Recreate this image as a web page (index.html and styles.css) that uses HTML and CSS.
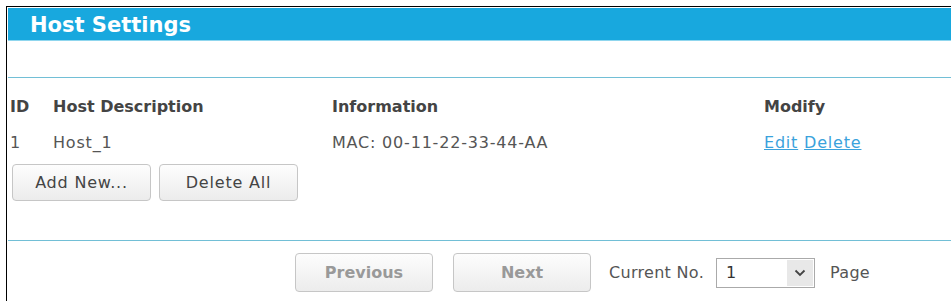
FILE: index.html
```html
<!DOCTYPE html>
<html>
<head>
    <title>Host Settings</title>
    <link rel="stylesheet" href="styles.css">
</head>
<body>
    <div id="host_panel">
        <div class="panel_title">Host Settings</div>

        <div class="spacer"></div>

        <div class="host_table">
            <div class="cell head">ID</div>
            <div class="cell head">Host Description</div>
            <div class="cell head">Information</div>
            <div class="cell head">Modify</div>

            <div class="cell">1</div>
            <div class="cell">Host_1</div>
            <div class="cell">MAC: 00-11-22-33-44-AA</div>
            <div class="cell"><a href="#">Edit</a> <a href="#">Delete</a></div>
        </div>

        <div class="table_buttons">
            <button class="btn">Add New...</button>
            <button class="btn">Delete All</button>
        </div>

        <div class="pager">
            <button class="btn btn_page" disabled>Previous</button>
            <button class="btn btn_page" disabled>Next</button>
            <span class="pager_label">Current No.</span>
            <div class="page_select">
                <span class="page_value">1</span>
                <span class="page_arrow">
                    <svg width="12" height="8" viewBox="0 0 12 8"><path d="M1.5 1.5 L6 6 L10.5 1.5" fill="none" stroke="#444" stroke-width="1.8"/></svg>
                </span>
            </div>
            <span class="pager_label page_word">Page</span>
        </div>
    </div>
</body>
</html>
```

FILE: styles.css
```css
body {
    margin:0;
    padding:6px 0 0 6px;
    background:#fff;
    font-family:"DejaVu Sans", Verdana, sans-serif;
    font-size:16px;
    letter-spacing:0.8px;
    color:#555;
}

#host_panel {
    border-top:1px solid #000;
    border-left:1px solid #000;
    padding:1px 0 0 1px;
    height:300px;
}

.panel_title {
    height:32px;
    line-height:35px;
    padding-left:22px;
    background:#18a8de;
    border-bottom:1px solid #8fd6ee;
    color:#fff;
    font-size:21px;
    font-weight:bold;
    letter-spacing:0;
}

.spacer {
    height:36px;
    border-bottom:1px solid #72bfd6;
}

.host_table {
    display:grid;
    grid-template-columns:43px 279px 432px auto;
    padding:19px 0 0 2px;
    row-gap:16px;
}

.cell {
    line-height:20px;
}

.cell.head {
    font-weight:bold;
    letter-spacing:0;
    color:#444;
}

.cell a {
    color:#3aa2dc;
}

.table_buttons {
    display:flex;
    gap:8px;
    padding:11px 0 39px 4px;
    height:37px;
    border-bottom:1px solid #72bfd6;
}

.btn {
    width:139px;
    height:37px;
    border:1px solid #c6c6c6;
    border-radius:4px;
    background:linear-gradient(#fdfdfd, #ececec);
    font-family:"DejaVu Sans", Verdana, sans-serif;
    font-size:16px;
    letter-spacing:0.8px;
    color:#444;
    padding:0;
}

.btn_page {
    width:138px;
    height:39px;
    font-weight:bold;
    letter-spacing:0;
    color:#999;
}

.pager {
    display:flex;
    align-items:center;
    padding:12px 0 0 287px;
}

.pager .btn_page + .btn_page {
    margin-left:20px;
}

.pager_label {
    margin-left:18px;
    letter-spacing:0.3px;
}

.page_select {
    display:flex;
    align-items:stretch;
    width:99px;
    height:30px;
    margin-left:12px;
    border:1px solid #aaa;
    box-sizing:border-box;
}

.page_value {
    flex:1;
    padding-left:9px;
    line-height:28px;
    color:#333;
}

.page_arrow {
    width:26px;
    margin:1px;
    background:#e8e8e8;
    display:flex;
    align-items:center;
    justify-content:center;
}

.page_word {
    margin-left:15px;
}
```
